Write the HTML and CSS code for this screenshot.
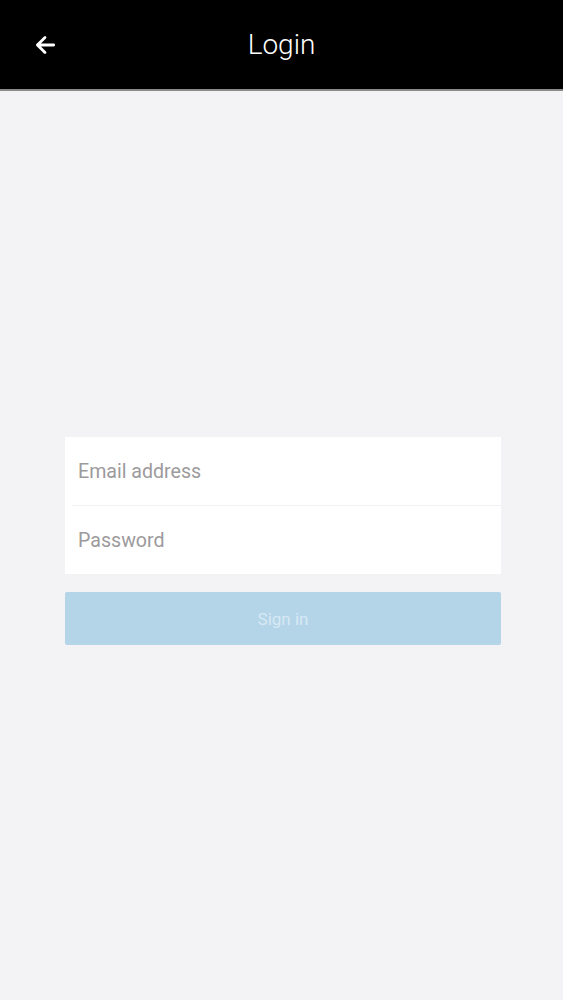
FILE: index.html
```html
<!DOCTYPE html>
<html>
<head>
<meta charset="utf-8">
<link rel="stylesheet" href="styles.css">
</head>
<body>
<header class="topbar">
  <div class="back">
    <svg width="26" height="26" viewBox="0 0 24 24"><path d="M20 12H5M12 5l-7 7 7 7" fill="none" stroke="#fff" stroke-width="2.6" stroke-linecap="round" stroke-linejoin="round"/></svg>
  </div>
  <h1 class="title">Login</h1>
</header>
<main class="content">
  <div class="form">
    <div class="card">
      <div class="field">Email address</div>
      <div class="divider"></div>
      <div class="field">Password</div>
    </div>
    <div class="button">Sign in</div>
  </div>
</main>
</body>
</html>
```
FILE: styles.css
```css
html, body { margin: 0; padding: 0; }
body {
  background: #f3f2f4;
  font-family: Roboto, "Noto Sans", sans-serif;
  width: 563px;
  height: 1000px;
  overflow: hidden;
}
.topbar {
  height: 89px;
  background: #000;
  border-bottom: 2px solid #8a8a8a;
  display: flex;
  align-items: center;
  justify-content: center;
  position: relative;
}
.back {
  position: absolute;
  left: 32px;
  top: 32px;
  width: 26px;
  height: 26px;
  display: flex;
}
.title {
  margin: 0;
  margin-top: 0;
  color: #fff;
  font-weight: 300;
  font-size: 28px;
}
.content {
  padding-top: 346px;
  padding-left: 65px;
  display: flex;
}
.form {
  width: 436px;
  display: flex;
  flex-direction: column;
  gap: 18px;
}
.card {
  background: #fff;
  display: flex;
  flex-direction: column;
}
.field {
  height: 68px;
  display: flex;
  align-items: center;
  padding-left: 13px;
  color: #9c9a9c;
  font-size: 19.6px;
}
.divider {
  height: 1px;
  margin-left: 7px;
  background: #f1f1f3;
}
.button {
  height: 53px;
  background: #b4d4e8;
  border-radius: 2px;
  color: #d7e9f4;
  font-size: 17px;
  display: flex;
  align-items: center;
  justify-content: center;
}
```
